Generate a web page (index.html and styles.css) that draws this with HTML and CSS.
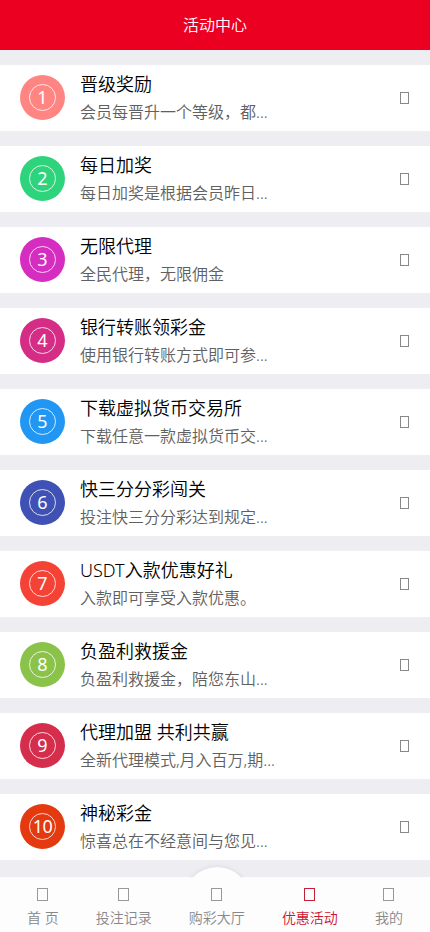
FILE: index.html
```html
<!DOCTYPE html>
<html lang="zh-CN">
<head>
<meta charset="utf-8">
<meta name="viewport" content="width=device-width, initial-scale=1">
<title>活动中心</title>
<link rel="stylesheet" href="styles.css">
</head>
<body>
<header class="header"><h1 class="header-title">活动中心</h1></header>
<main class="list">
<article class="card"><div class="badge c1"><span class="ring">1</span></div><div class="info"><h2 class="title">晋级奖励</h2><p class="desc">会员每晋升一个等级，都...</p></div><i class="arrow"></i></article>
<article class="card"><div class="badge c2"><span class="ring">2</span></div><div class="info"><h2 class="title">每日加奖</h2><p class="desc">每日加奖是根据会员昨日...</p></div><i class="arrow"></i></article>
<article class="card"><div class="badge c3"><span class="ring">3</span></div><div class="info"><h2 class="title">无限代理</h2><p class="desc">全民代理，无限佣金</p></div><i class="arrow"></i></article>
<article class="card"><div class="badge c4"><span class="ring">4</span></div><div class="info"><h2 class="title">银行转账领彩金</h2><p class="desc">使用银行转账方式即可参...</p></div><i class="arrow"></i></article>
<article class="card"><div class="badge c5"><span class="ring">5</span></div><div class="info"><h2 class="title">下载虚拟货币交易所</h2><p class="desc">下载任意一款虚拟货币交...</p></div><i class="arrow"></i></article>
<article class="card"><div class="badge c6"><span class="ring">6</span></div><div class="info"><h2 class="title">快三分分彩闯关</h2><p class="desc">投注快三分分彩达到规定...</p></div><i class="arrow"></i></article>
<article class="card"><div class="badge c7"><span class="ring">7</span></div><div class="info"><h2 class="title">USDT入款优惠好礼</h2><p class="desc">入款即可享受入款优惠。</p></div><i class="arrow"></i></article>
<article class="card"><div class="badge c8"><span class="ring">8</span></div><div class="info"><h2 class="title">负盈利救援金</h2><p class="desc">负盈利救援金，陪您东山...</p></div><i class="arrow"></i></article>
<article class="card"><div class="badge c9"><span class="ring">9</span></div><div class="info"><h2 class="title">代理加盟 共利共赢</h2><p class="desc">全新代理模式,月入百万,期...</p></div><i class="arrow"></i></article>
<article class="card"><div class="badge c10"><span class="ring">10</span></div><div class="info"><h2 class="title">神秘彩金</h2><p class="desc">惊喜总在不经意间与您见...</p></div><i class="arrow"></i></article>
</main>
<nav class="tabs">
<a class="tab"><i class="tab-icon"></i><span>首 页</span></a>
<a class="tab"><i class="tab-icon"></i><span>投注记录</span></a>
<a class="tab tab-main"><i class="tab-icon"></i><span>购彩大厅</span></a>
<a class="tab active"><i class="tab-icon"></i><span>优惠活动</span></a>
<a class="tab"><i class="tab-icon"></i><span>我的</span></a>
</nav>
</body>
</html>
```
FILE: styles.css
```css
* { box-sizing: border-box; margin: 0; padding: 0; }
body {
  height: 932px;
  overflow: hidden;
  display: flex;
  flex-direction: column;
  background: #eeeef2;
  font-family: "Noto Sans", "Noto Sans CJK SC", sans-serif;
  font-weight: 350;
}
.header {
  height: 50px;
  flex: none;
  display: flex;
  align-items: center;
  justify-content: center;
  background: #ec0022;
  color: #fff;
}
.header-title { font-size: 16px; font-weight: 350; line-height: 24px; }
.list {
  flex: 1;
  min-height: 0;
  padding-top: 15px;
  display: flex;
  flex-direction: column;
  gap: 15px;
}
.card {
  height: 66px;
  flex: none;
  display: flex;
  align-items: center;
  padding: 0 21px 0 20px;
  background: #fff;
}
.badge {
  width: 45px;
  height: 45px;
  flex: none;
  margin-bottom: 1px;
  border-radius: 50%;
  display: flex;
  align-items: center;
  justify-content: center;
}
.ring {
  width: 27px;
  height: 27px;
  border: 1px solid rgba(255, 255, 255, .8);
  border-radius: 50%;
  display: flex;
  align-items: center;
  justify-content: center;
  color: #fff;
  font-size: 18px;
  font-weight: 400;
  line-height: 25px;
}
.c1 { background: #ff8583; }
.c2 { background: #2ed47c; }
.c3 { background: #d52dc0; }
.c4 { background: #d52d86; }
.c5 { background: #2196f3; }
.c6 { background: #3f51b5; }
.c7 { background: #f44336; }
.c8 { background: #8bc34a; }
.c9 { background: #d52d4c; }
.c10 { background: #e5390f; }
.c10 .ring { letter-spacing: -.6px; }
.info { flex: 1; margin-left: 15px; white-space: nowrap; }
.title { font-size: 18px; font-weight: 350; line-height: 28px; color: #000; }
.desc { font-size: 16px; line-height: 28px; color: #606060; }
.arrow { width: 9px; height: 12px; border: 1px solid #888; }
.tabs {
  position: relative;
  height: 55px;
  flex: none;
  display: flex;
  justify-content: space-between;
  padding: 11px 27px 0;
  background: #fdfdfe;
  color: #888;
}
.tab {
  position: relative;
  display: flex;
  flex-direction: column;
  align-items: center;
  font-size: 14px;
  line-height: 20px;
  white-space: nowrap;
}
.tab > * { position: relative; }
.tab-icon { width: 11px; height: 13px; margin-bottom: 7px; border: 1px solid #999; }
.tab-main::before {
  content: "";
  position: absolute;
  top: -21px;
  left: -5px;
  width: 66px;
  height: 66px;
  border-radius: 50%;
  background: #fdfdfe;
  box-shadow: 0 0 5px rgba(0, 0, 0, .1);
  clip-path: inset(-8px -8px 55px);
}
.active { color: #cc1430; }
.active .tab-icon { border-color: #c02038; }
```
